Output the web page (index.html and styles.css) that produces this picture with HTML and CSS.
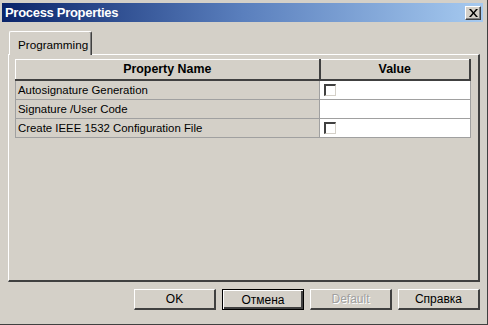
FILE: index.html
```
<!DOCTYPE html>
<html lang="en">
<head>
    <meta charset="UTF-8">
    <title>Process Properties</title>
    <link rel="stylesheet" href="styles.css">
</head>
<body>
    <div class="window">
        <div class="titlebar">
            <span class="title">Process Properties</span>
            <span class="close-btn">
                <svg width="9" height="8" viewBox="0 0 9 8"><path d="M0 0h2l2.5 3 2.5-3h2l-3.5 4 3.5 4h-2l-2.5-3-2.5 3h-2l3.5-4z" fill="#000"/></svg>
            </span>
        </div>

        <div class="client">
            <div class="tabs">
                <div class="tab active">Programming</div>
            </div>
            <div class="panel">
                <table class="grid">
                    <thead>
                        <tr>
                            <th class="col-name">Property Name</th>
                            <th class="col-value">Value</th>
                        </tr>
                    </thead>
                    <tbody>
                        <tr>
                            <td class="name">Autosignature Generation</td>
                            <td class="value"><span class="check"></span></td>
                        </tr>
                        <tr>
                            <td class="name">Signature /User Code</td>
                            <td class="value"></td>
                        </tr>
                        <tr>
                            <td class="name">Create IEEE 1532 Configuration File</td>
                            <td class="value"><span class="check"></span></td>
                        </tr>
                    </tbody>
                </table>
            </div>

            <div class="buttons">
                <button class="btn">OK</button>
                <button class="btn default">Отмена</button>
                <button class="btn" disabled>Default</button>
                <button class="btn">Справка</button>
            </div>
        </div>
    </div>
</body>
</html>
```

FILE: styles.css
```
body {
    margin: 0;
    background: #d4d0c8;
    font-family: "Liberation Sans", Arial, sans-serif;
    font-size: 11px;
}
.window {
    width: 488px;
    height: 325px;
    box-sizing: border-box;
    padding: 3px 4px 3px 2px;
    background: #d4d0c8;
    border-right: 1px solid #404040;
    border-bottom: 1px solid #404040;
    display: flex;
    flex-direction: column;
}
.titlebar {
    height: 19px;
    background: linear-gradient(to right, #0a246a, #5a7fbd 50%, #a6caf0);
    display: flex;
    align-items: center;
    justify-content: space-between;
    padding: 0 2px 0 3px;
}
.title {
    color: #fff;
    font-weight: bold;
    font-size: 13px;
    letter-spacing: -0.3px;
}
.close-btn {
    width: 16px;
    height: 14px;
    box-sizing: border-box;
    background: #d4d0c8;
    border-top: 1px solid #fff;
    border-left: 1px solid #fff;
    border-right: 1px solid #404040;
    border-bottom: 1px solid #404040;
    box-shadow: inset -1px -1px 0 #808080;
    display: flex;
    align-items: center;
    justify-content: center;
}
.client {
    flex: 1;
    padding: 9px 0 0 6px;
    display: flex;
    flex-direction: column;
}
.tabs {
    display: flex;
    padding-left: 1px;
    height: 23px;
    position: relative;
    z-index: 1;
}
.tab {
    width: 83px;
    height: 24px;
    box-sizing: border-box;
    padding: 6px 0 0 8px;
    font-size: 11.7px;
    background: #d4d0c8;
    border-top: 1px solid #fff;
    border-left: 1px solid #fff;
    border-right: 1px solid #404040;
    border-radius: 2px 2px 0 0;
    box-shadow: inset -1px 0 0 #808080;
}
.panel {
    width: 472px;
    height: 228px;
    box-sizing: border-box;
    border-top: 1px solid #fff;
    border-left: 1px solid #fff;
    border-right: 2px solid #404040;
    border-bottom: 2px solid #404040;
    padding: 4px 0 0 6px;
}
.grid {
    width: 456px;
    border-collapse: collapse;
    font-size: 11.4px;
}
.grid th {
    height: 20px;
    padding: 0;
    box-sizing: border-box;
    background: #d4d0c8;
    font-weight: bold;
    font-size: 12.4px;
    text-align: center;
    border-top: 1px solid #fff;
    border-left: 1px solid #fff;
    border-right: 2px solid #404040;
    border-bottom: 2px solid #404040;
}
.grid .col-name { width: 304px; }
.grid td {
    height: 18px;
    padding: 0 0 0 2px;
    border: 1px solid #a0a0a0;
}
.grid td.name { background: #d4d0c8; }
.grid td.value {
    background: #fff;
    padding-left: 4px;
    border-left: 1px solid #808080;
}
.check {
    display: block;
    width: 12px;
    height: 12px;
    box-sizing: border-box;
    border-top: 2px solid #404040;
    border-left: 2px solid #404040;
    border-right: 1px solid #d4d0c8;
    border-bottom: 1px solid #d4d0c8;
    background: #fff;
}
.buttons {
    display: flex;
    justify-content: flex-end;
    gap: 6px;
    margin-top: 7px;
    width: 472px;
}
.btn {
    width: 82px;
    height: 21px;
    box-sizing: border-box;
    background: #d4d0c8;
    font-family: "Liberation Sans Narrow", "Liberation Sans", Arial, sans-serif;
    font-size: 12px;
    color: #000;
    padding: 0;
    border-top: 1px solid #fff;
    border-left: 1px solid #fff;
    border-right: 2px solid #404040;
    border-bottom: 2px solid #404040;
}
.btn.default {
    border: 1px solid #000;
    box-shadow: inset 1px 1px 0 #fff, inset -2px -2px 0 #404040;
}
.btn:disabled {
    color: #a0a0a0;
    text-shadow: 1px 1px 0 #fff;
}
```
